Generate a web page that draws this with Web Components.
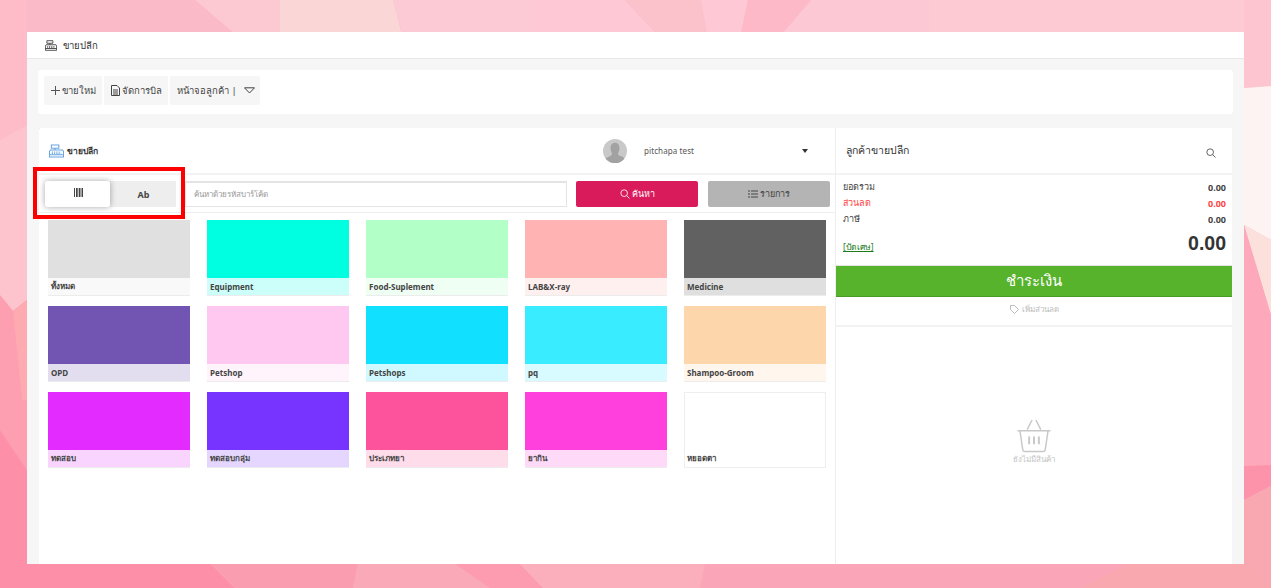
<!DOCTYPE html>
<html lang="th">
<head>
<meta charset="utf-8">
<title>ขายปลีก</title>
<style>
	html, body { margin: 0; height: 100%; }
	body { overflow: hidden; font-family: "Noto Sans", "Liberation Sans", sans-serif; }
</style>
</head>
<body>
<pos-backdrop></pos-backdrop>
<pos-app>
	<pos-toolbar></pos-toolbar>
	<div style="display:flex;flex:1;min-height:0;gap:1px;background:#eee">
		<pos-catalog style="flex:0 0 796px"></pos-catalog>
		<pos-cart style="flex:0 0 396px"></pos-cart>
	</div>
</pos-app>
<script>
const CASH_ICON = `<svg viewBox="0 0 16 14" width="100%" height="100%" fill="none" stroke="currentColor" stroke-width="1.1">
	<path d="M2.500.6h8v3.400h-8zM6.500 4v2M1.500 6h13l1 1.500v5.900H.5V7.500zM.5 11h15"/>
	<path d="M3 8.200h10M3 9.800h10" stroke-dasharray="1.200 1.200"/>
</svg>`;
const SEARCH_ICON = `<svg viewBox="0 0 12 12" width="100%" height="100%" fill="none" stroke="currentColor" stroke-width="1"><circle cx="5" cy="5" r="4"/><path d="M8 8l3.400 3.400"/></svg>`;

class PosBackdrop extends HTMLElement {
	static Register() { customElements.define("pos-backdrop", PosBackdrop); }
	constructor() {
		super();
		this.attachShadow({ mode: "open" });
		const top = [
			["0,0 195,0 235,34 0,34", "#fbbac8"],
			["195,0 280,0 280,34 235,34", "#fcc8d2"],
			["280,0 393,0 402,34 280,34", "#fad6d6"],
			["393,0 531,0 531,34 402,34", "#fccad5"],
			["531,0 625,0 657,34 531,34", "#fec8d5"],
			["625,0 701,0 707,34 657,34", "#fcc2cc"],
			["701,0 748,0 741,34 707,34", "#fec9d4"],
			["748,0 811,0 782,34 741,34", "#feb9c8"],
			["811,0 929,0 929,34 782,34", "#fcc8d4"],
			["929,0 1271,0 1271,34 929,34", "#fdc9d3"],
		];
		const left = [
			["0,0 27,0 27,300 13,311 0,300", "#fdbcc8"],
			["0,140 27,125 27,300 13,311 0,295", "#fdc4cd"],
			["0,295 13,311 27,300 27,470 0,430", "#fd9fb0"],
			["13,311 27,300 27,400 22,400", "#fdaab0"],
			["0,430 27,470 27,588 0,588", "#fd8fa8"],
		];
		const right = [
			["1244,0 1271,0 1271,86 1244,88", "#fdc5cf"],
			["1244,88 1271,86 1271,240 1244,225", "#fdf3f3"],
			["1244,225 1271,240 1271,315", "#fbe0dc"],
			["1244,225 1271,315 1271,465 1244,466", "#fda9bb"],
			["1244,466 1271,465 1271,486 1244,500", "#fd93aa"],
			["1244,500 1271,486 1271,588 1244,588", "#f9a8b2"],
		];
		const bottom = [
			["0,564 211,564 235,588 0,588", "#fd8fa8"],
			["211,564 358,564 353,588 235,588", "#fb9db0"],
			["358,564 455,564 490,588 353,588", "#f9a9b7"],
			["455,564 520,564 543,588 490,588", "#fd9bb0"],
			["520,564 705,564 700,588 543,588", "#fbaebc"],
			["705,564 1127,564 1080,588 700,588", "#fba6b8"],
			["1127,564 1244,564 1271,588 1080,588", "#f9a8b0"],
		];
		const polys = [...top, ...left, ...right, ...bottom]
			.map(([points, fill]) => `<polygon points="${points}" fill="${fill}"/>`).join("");
		this.shadowRoot.innerHTML = `
		<style>
			:host { position: fixed; inset: 0; z-index: -1; display: block; background: #fbb3c2; }
			svg { display: block; width: 100%; height: 100%; }
		</style>
		<svg viewBox="0 0 1271 588" preserveAspectRatio="none">${polys}</svg>`;
	}
}

class PosApp extends HTMLElement {
	static Register() { customElements.define("pos-app", PosApp); }
	constructor() {
		super();
		this.attachShadow({ mode: "open" });
		this.shadowRoot.innerHTML = `
		<style>
			:host {
				display: flex;
				flex-direction: column;
				width: 1217px;
				height: 532px;
				margin: 32px 0 0 27px;
				background: #f6f6f6;
				overflow: hidden;
			}
			header {
				flex: none;
				display: flex;
				align-items: center;
				gap: 6px;
				height: 26px;
				padding-left: 18px;
				background: #fff;
				border-bottom: 1px solid #e8e8e8;
				font-size: 9.5px;
				color: #333;
			}
			.ico { width: 12px; height: 11px; color: #333; }
			main {
				flex: 1;
				min-height: 0;
				display: flex;
				flex-direction: column;
				padding: 11px 12px 0;
			}
		</style>
		<header><span class="ico">${CASH_ICON}</span>ขายปลีก</header>
		<main><slot></slot></main>`;
	}
}

class PosToolbar extends HTMLElement {
	static Register() { customElements.define("pos-toolbar", PosToolbar); }
	constructor() {
		super();
		this.attachShadow({ mode: "open" });
		this.shadowRoot.innerHTML = `
		<style>
			:host {
				flex: none;
				display: flex;
				align-items: center;
				gap: 2px;
				height: 44px;
				margin: 0 -1px 14px;
				padding: 0 6px 3px;
				box-sizing: border-box;
				background: #fff;
				border-radius: 3px;
				font-size: 9.5px;
				color: #444;
			}
			div {
				display: flex;
				align-items: center;
				justify-content: center;
				gap: 2px;
				height: 29px;
				background: #f6f6f6;
				border-radius: 2px;
				box-sizing: border-box;
			}
			svg { flex: none; }
		</style>
		<div style="width:58px">
			<svg width="9" height="9" viewBox="0 0 9 9" stroke="#555" fill="none"><path d="M4.500 0v9M0 4.500h9"/></svg>ขายใหม่
		</div>
		<div style="width:64px">
			<svg width="9" height="11" viewBox="0 0 9 11" stroke="#444" fill="none"><path d="M.5.5h5.500l2.500 2.500v7.500h-8zM2 5h5M2 7h5M2 9h5"/></svg>จัดการบิล
		</div>
		<div style="width:90px;gap:7px;padding-left:2px">
			<span>หน้าจอลูกค้า |</span>
			<svg width="11" height="7" viewBox="0 0 11 7" stroke="#444" fill="none"><path d="M.5.800h10L5.500 6z"/></svg>
		</div>`;
	}
}

class PosTile extends HTMLElement {
	static Register() { customElements.define("pos-tile", PosTile); }
	constructor() {
		super();
		this.attachShadow({ mode: "open" });
		this.shadowRoot.innerHTML = `
		<style>
			:host {
				display: flex;
				flex-direction: column;
				height: 76px;
				box-sizing: border-box;
				background: var(--tint, #fff);
				box-shadow: inset 0 -1px 0 #ececec;
			}
			:host([blank]) { box-shadow: inset 0 0 0 1px #eee; }
			.swatch { flex: none; height: 58px; background: var(--fill, #fff); }
			:host([blank]) .swatch { background: transparent; }
			.name {
				flex: 1;
				display: flex;
				align-items: center;
				padding: 0 0 2px 3px;
				font-size: 8px;
				font-weight: 700;
				color: #444;
				white-space: nowrap;
			}
		</style>
		<div class="swatch"></div>
		<div class="name"><slot></slot></div>`;
	}
}

class PosCatalog extends HTMLElement {
	static Register() { customElements.define("pos-catalog", PosCatalog); }
	static tiles = [
		["ทั้งหมด", "#e0e0e0", "#f9f9f9"],
		["Equipment", "#00ffe1", "#ccfff9"],
		["Food-Suplement", "#b2ffc8", "#f0fff4"],
		["LAB&amp;X-ray", "#ffb3b3", "#fff0f0"],
		["Medicine", "#616161", "#dfdfdf"],
		["OPD", "#7255b3", "#e3ddf0"],
		["Petshop", "#fec8f0", "#fff4fc"],
		["Petshops", "#12e0ff", "#cff9ff"],
		["pq", "#3aecff", "#d8fbff"],
		["Shampoo-Groom", "#fed6ab", "#fff6ee"],
		["ทดสอบ", "#e32bff", "#f9d4ff"],
		["ทดสอบกลุ่ม", "#7733ff", "#e4d6ff"],
		["ประเภทยา", "#fc539c", "#fedcea"],
		["ยากิน", "#ff40dd", "#ffd9f8"],
		["หยอดตา", "#ffffff", "#ffffff"],
	];
	constructor() {
		super();
		this.attachShadow({ mode: "open" });
		const tiles = PosCatalog.tiles.map(([name, fill, tint]) =>
			`<pos-tile ${fill === "#ffffff" ? "blank" : ""} style="--fill:${fill};--tint:${tint}">${name}</pos-tile>`).join("");
		this.shadowRoot.innerHTML = `
		<style>
			:host { display: flex; flex-direction: column; background: #fff; border-radius: 3px 0 0 0; position: relative; }
			.head {
				flex: none;
				display: flex;
				align-items: center;
				height: 47px;
				box-sizing: border-box;
				padding-left: 10px;
				border-bottom: 2px solid #f3f3f3;
				font-size: 8.5px;
				font-weight: 700;
				color: #333;
			}
			.head .ico { width: 15px; height: 14px; margin-right: 3px; color: #6aa5e0; }
			.user { display: flex; align-items: center; margin-left: 505px; width: 206px; font-weight: 400; font-size: 8px; letter-spacing: .1px; color: #555; }
			.user i { flex: none; width: 24px; height: 24px; margin-right: 17px; }
			.user b { margin-left: auto; margin-right: 1px; width: 0; height: 0; border: 3px solid transparent; border-top: 4px solid #333; border-bottom: 0; }
			.search {
				flex: none;
				display: flex;
				align-items: center;
				height: 38px;
				box-sizing: border-box;
				padding: 1px 5px 0 6px;
				border-bottom: 1px solid #eee;
				font-size: 8px;
			}
			.seg { flex: none; display: flex; width: 131px; height: 26px; background: #eee; margin-right: 9px; font-size: 9px; }
			.seg span { flex: 1; display: flex; align-items: center; justify-content: center; font-weight: 700; color: #444; padding-left: 1px; }
			.seg .on { flex: 0 0 65px; background: #fff; border-radius: 2px; box-shadow: 0 0 6px rgba(0,0,0,.35); padding-bottom: 3px; box-sizing: border-box; }
			.input {
				flex: none;
				width: 382px;
				height: 26px;
				box-sizing: border-box;
				display: flex;
				align-items: center;
				padding-left: 8px;
				border: 1px solid #e4e4e4;
				border-top-width: 2px;
				color: #999;
			}
			.btn {
				flex: none;
				height: 26px;
				display: flex;
				align-items: center;
				justify-content: center;
				gap: 2px;
				border-radius: 2px;
				box-sizing: border-box;
				font-size: 9px;
			}
			.btn span { width: 10px; height: 10px; }
			.go { width: 122px; margin-left: 9px; background: #d91b5c; color: #fff; }
			.list { width: 122px; margin-left: 10px; background: #b4b4b4; color: #444; }
			.grid {
				display: grid;
				grid-template-columns: repeat(5, 142px);
				column-gap: 17px;
				row-gap: 10px;
				padding: 7px 0 0 9px;
			}
			.mark { position: absolute; left: -6px; top: 39px; width: 152px; height: 52px; box-sizing: border-box; border: 4px solid #f00; pointer-events: none; }
		</style>
		<div class="head">
			<span class="ico">${CASH_ICON}</span>ขายปลีก
			<div class="user">
				<i><svg viewBox="0 0 24 24" width="24" height="24"><circle cx="12" cy="12" r="12" fill="#c9c9c9"/><path d="M7.500 9c0-7 9-7 9 0 0 3-1.500 5-1.500 6 0 2 5 2 6.500 4.500A12 12 0 0 1 2.500 19.500C4 18 9 17 9 15c0-1-1.500-3-1.500-6z" fill="#a2a2a2"/></svg></i>
				pitchapa test<b></b>
			</div>
		</div>
		<div class="search">
			<div class="seg">
				<span class="on"><svg width="9" height="9" viewBox="0 0 9 9" stroke="#444" fill="none"><path d="M.5 0v9M2.500 0v9M3.800 0v9M5.500 0v9M8.500 0v9M7 0v9"/></svg></span>
				<span>Ab</span>
			</div>
			<div class="input">ค้นหาด้วยรหัสบาร์โค้ด</div>
			<div class="btn go"><span>${SEARCH_ICON}</span>ค้นหา</div>
			<div class="btn list">
				<span><svg width="10" height="10" viewBox="0 0 10 10" stroke="#444" fill="none"><path d="M0 2h2M3 2h7M0 5h2M3 5h7M0 8h2M3 8h7"/></svg></span>รายการ
			</div>
		</div>
		<div class="grid">${tiles}</div>
		<div class="mark"></div>`;
	}
}

class PosCart extends HTMLElement {
	static Register() { customElements.define("pos-cart", PosCart); }
	constructor() {
		super();
		this.attachShadow({ mode: "open" });
		this.shadowRoot.innerHTML = `
		<style>
			:host { display: flex; flex-direction: column; background: #fff; font-size: 9px; color: #444; }
			.top {
				flex: none;
				display: flex;
				align-items: center;
				justify-content: space-between;
				height: 47px;
				box-sizing: border-box;
				padding: 0 16px 0 10px;
				border-bottom: 2px solid #f3f3f3;
				font-size: 10.5px;
				color: #333;
			}
			.top span { width: 10px; height: 10px; color: #444; margin-top: 3px; }
			.sum { flex: none; padding: 4px 6px 0 7px; height: 90px; box-sizing: border-box; }
			.row { display: flex; justify-content: space-between; align-items: center; height: 16px; }
			.row b { font-weight: 700; }
			.red { color: #f44; }
			.net { display: flex; justify-content: space-between; align-items: flex-end; height: 26px; margin-top: 1px; }
			.net a { color: #1c7c1c; text-decoration: underline; font-size: 8.5px; }
			.net b { font-size: 19.5px; line-height: 22px; font-weight: 700; color: #333; font-family: "Liberation Sans", sans-serif; }
			.pay {
				flex: none;
				display: flex;
				align-items: center;
				justify-content: center;
				height: 32px;
				box-sizing: border-box;
				border-top: 1px solid #e4e4e4;
				border-bottom: 1px solid #4a9a26;
				background: #57b22c;
				color: #fff;
				font-size: 15px;
			}
			.disc {
				flex: none;
				display: flex;
				align-items: center;
				justify-content: center;
				gap: 3px;
				height: 30px;
				box-sizing: border-box;
				padding-bottom: 4px;
				border-bottom: 2px solid #f3f3f3;
				color: #bbb;
				font-size: 8px;
			}
			.empty { flex: 1; display: flex; flex-direction: column; align-items: center; padding-top: 92px; color: #c4c4c4; font-size: 8px; }
			.empty svg { margin-left: -1px; }
		</style>
		<div class="top">ลูกค้าขายปลีก<span>${SEARCH_ICON}</span></div>
		<div class="sum">
			<div class="row"><span>ยอดรวม</span><b>0.00</b></div>
			<div class="row red"><span>ส่วนลด</span><b>0.00</b></div>
			<div class="row"><span>ภาษี</span><b>0.00</b></div>
			<div class="net"><a>[ปัดเศษ]</a><b>0.00</b></div>
		</div>
		<div class="pay">ชำระเงิน</div>
		<div class="disc">
			<svg width="9" height="9" viewBox="0 0 9 9" fill="none" stroke="#bbb"><path d="M.5.500h4l4 4-4 4-4-4z"/></svg>เพิ่มส่วนลด
		</div>
		<div class="empty">
			<svg width="36" height="34" viewBox="0 0 36 35" fill="none" stroke="#c8c8c8" stroke-width="1.500">
				<path d="M11 11 16 1M25 11 20 1M1 12h34M3.500 12l3 20q.2 1.500 2 1.500h19q1.800 0 2-1.500l3-20"/>
				<path d="M13 18v8M18 18v8M23 18v8" stroke-width="2"/>
			</svg>
			ยังไม่มีสินค้า
		</div>`;
	}
}

PosBackdrop.Register();
PosApp.Register();
PosToolbar.Register();
PosTile.Register();
PosCatalog.Register();
PosCart.Register();
</script>
</body>
</html>
